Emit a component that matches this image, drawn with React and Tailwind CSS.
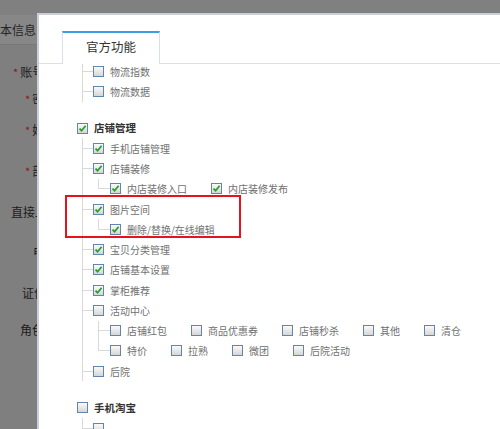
import React from 'react'

const font = { fontFamily: '"Noto Sans CJK SC", "Noto Sans", sans-serif' }

function Box({ checked }) {
  return (
    <span className="flex h-[11px] w-[11px] shrink-0 items-center justify-center border border-[#6285ad] bg-gradient-to-b from-[#fafafa] to-[#d6d6d6]">
      {checked && (
        <svg width="9" height="9" viewBox="0 0 9 9">
          <path d="M1.5 4.6 L3.6 6.7 L7.6 1.8" fill="none" stroke="#25a12a" strokeWidth="1.8" />
        </svg>
      )}
    </span>
  )
}

function Item({ label, checked, bold }) {
  return (
    <span className="flex items-center gap-[6px]">
      <Box checked={checked} />
      {label && (
        <span className={bold ? 'text-[10.5px] font-bold text-[#333]' : 'text-[10px] text-[#707070]'}>{label}</span>
      )}
    </span>
  )
}

// level-1 row: short horizontal connector off the parent's line
function Row1({ label, checked }) {
  return (
    <div className="flex h-[20.25px] items-center">
      <span className="h-px w-[10px] bg-[#d9d9d9]" />
      <Item label={label} checked={checked} />
    </div>
  )
}

// level-2 row: L-shaped connector, may hold several items
function Row2({ items, last = true }) {
  return (
    <div className="flex h-[20.25px] items-center">
      {last ? (
        <span className="h-[10.5px] w-[12px] self-start border-b border-l border-[#d9d9d9]" />
      ) : (
        <span className="flex w-[12px] items-center self-stretch border-l border-[#d9d9d9]">
          <span className="h-px w-full bg-[#d9d9d9]" />
        </span>
      )}
      <div className="flex items-center gap-[24px]">
        {items.map(([l, c]) => (
          <Item key={l} label={l} checked={c} />
        ))}
      </div>
    </div>
  )
}

function Root({ label, checked }) {
  return (
    <div className="flex h-[20.25px] items-center">
      <Item label={label} checked={checked} bold />
    </div>
  )
}

const labels = [
  { mt: 15, pl: 13, star: true, text: '账号名称' },
  { mt: 3, pl: 25, star: true, text: '密码' },
  { mt: 7, pl: 25, star: true, text: '姓名' },
  { mt: 17, pl: 25, star: true, text: '部门' },
  { mt: 17, pl: 11, star: false, text: '直接上级' },
  { mt: 16, pl: 33, star: false, text: '电话' },
  { mt: 17, pl: 22, star: false, text: '证件' },
  { mt: 13, pl: 20, star: false, text: '角色' },
]

export default function App() {
  return (
    <div className="relative h-[429px] w-[500px] overflow-hidden bg-[#7f7f7f]" style={font}>
      {/* page behind the overlay */}
      <div className="flex flex-col">
        <div className="h-[15px] bg-[#808080]" />
        <div className="flex h-[30px] items-center border-b border-[#777] bg-[#878787]">
          <span className="-ml-[12px] text-[12px] text-[#262626]">基本信息</span>
        </div>
        {labels.map((r) => (
          <div
            key={r.text}
            className="flex h-[24px] items-center whitespace-nowrap text-[12px] text-[#1c1c1c]"
            style={{ marginTop: r.mt, paddingLeft: r.pl }}
          >
            {r.star && <span className="mr-[2px] text-[11px] text-[#8e1414]">*</span>}
            {r.text}：
          </div>
        ))}
      </div>

      {/* dialog */}
      <div className="absolute bottom-0 left-[37px] right-0 top-[13px] flex flex-col overflow-hidden border-l-2 border-t-2 border-[#c9ced8] bg-white">
        <div className="flex border-b border-[#dcdfe5] pl-[23px] pt-[16px]">
          <div className="-mb-px flex h-[33px] w-[98px] items-center justify-center border-x border-t-2 border-x-[#dcdfe5] border-t-[#3d9de2] bg-white pb-[2px] text-[12.5px] text-[#333]">
            官方功能
          </div>
        </div>

        <div className="flex-1 overflow-hidden">
          <div className="-mt-[3px] flex flex-col pl-[38px]">
            <div className="ml-[5px] flex flex-col border-l border-[#d9d9d9]">
              <Row1 label="物流指数" />
              <Row1 label="物流数据" />
            </div>

            <div className="mt-[16.5px]">
              <Root label="店铺管理" checked />
              <div className="ml-[5px] flex flex-col border-l border-[#d9d9d9]">
                <Row1 label="手机店铺管理" checked />
                <Row1 label="店铺装修" checked />
                <div className="ml-[15px]">
                  <Row2 items={[['内店装修入口', true], ['内店装修发布', true]]} />
                </div>
                <Row1 label="图片空间" checked />
                <div className="ml-[15px]">
                  <Row2 items={[['删除/替换/在线编辑', true]]} />
                </div>
                <Row1 label="宝贝分类管理" checked />
                <Row1 label="店铺基本设置" checked />
                <Row1 label="掌柜推荐" checked />
                <Row1 label="活动中心" />
                <div className="ml-[15px]">
                  <Row2
                    last={false}
                    items={[['店铺红包'], ['商品优惠券'], ['店铺秒杀'], ['其他'], ['清仓']]}
                  />
                  <Row2 items={[['特价'], ['拉熟'], ['微团'], ['后院活动']]} />
                </div>
                <Row1 label="后院" />
              </div>
            </div>

            <div className="mt-[16.5px]">
              <Root label="手机淘宝" />
              <div className="ml-[5px] flex flex-col border-l border-[#d9d9d9]">
                <Row1 />
              </div>
            </div>
          </div>
        </div>
      </div>

      {/* red annotation frame */}
      <div className="absolute left-[65px] top-[195px] h-[43px] w-[176px] border-2 border-[#e5131b]" />
    </div>
  )
}
